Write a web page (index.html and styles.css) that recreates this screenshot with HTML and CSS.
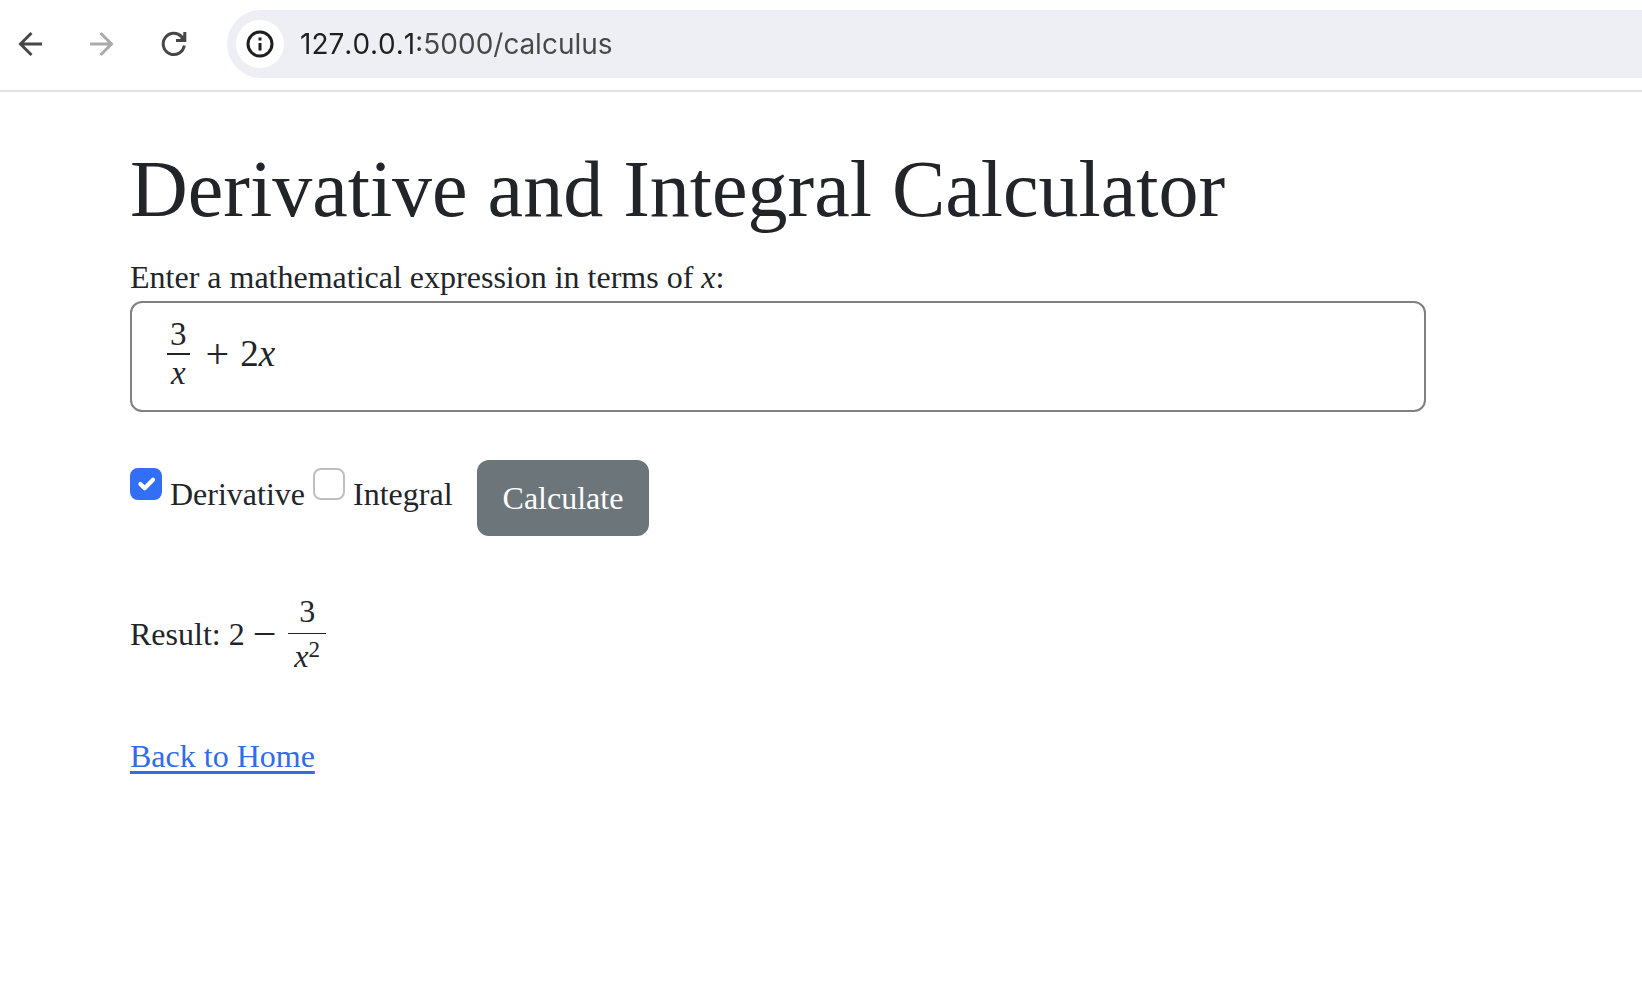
FILE: index.html
```html
<!DOCTYPE html>
<html lang="en">
<head>
<meta charset="utf-8">
<meta name="viewport" content="width=device-width, initial-scale=1">
<title>Derivative and Integral Calculator</title>
<link rel="stylesheet" href="styles.css">
</head>
<body>
<header class="toolbar">
  <button class="nav-button" type="button" aria-label="Back">
    <svg viewBox="0 0 40 40" width="40" height="40"><path d="M31 20H9.500M20.500 9L9.500 20L20.500 31"/></svg>
  </button>
  <button class="nav-button" type="button" aria-label="Forward" disabled>
    <svg viewBox="0 0 40 40" width="40" height="40"><path d="M7 20H28.500M17.500 9L28.500 20L17.500 31"/></svg>
  </button>
  <button class="nav-button" type="button" aria-label="Reload">
    <svg viewBox="0 0 40 40" width="40" height="40"><path d="M29.300 21.500A10.600 10.600 0 1 1 26.500 12.600L29 15.500"/><path d="M29.800 8V16.500H21"/><path class="fill" d="M31 9V18H22Z"/></svg>
  </button>
  <div class="address">
    <button class="site-info" type="button" aria-label="View site information">
      <svg viewBox="0 0 28 28" width="28" height="28"><circle cx="14" cy="14" r="12"/><path d="M14 13V20.500"/><path d="M14 7.500V10.500"/></svg>
    </button>
    <input class="url" type="text" aria-label="Address" value="127.0.0.1:5000/calculus">
  </div>
</header>

<main class="page">
  <h1 class="title">Derivative and Integral Calculator</h1>
  <form class="calculator">
    <div id="prompt">Enter a mathematical expression in terms of <i>x</i>:</div>
    <div class="math-field" role="textbox" contenteditable="true" spellcheck="false" aria-labelledby="prompt"><span class="frac"><span class="num">3</span><span class="den"><i>x</i></span></span><span class="op">+</span><span>2<i>x</i></span></div>
    <div class="options">
      <input class="check" type="checkbox" id="derivative" checked>
      <label for="derivative">Derivative</label>
      <input class="check" type="checkbox" id="integral">
      <label for="integral">Integral</label>
      <button class="calculate" type="button">Calculate</button>
    </div>
  </form>
  <div class="result">
    <span>Result:</span>
    <span class="answer"><span>2</span><span class="op">−</span><span class="frac"><span class="num">3</span><span class="den"><i>x</i><sup>2</sup></span></span></span>
  </div>
  <a class="home" href="/">Back to Home</a>
</main>
</body>
</html>
```

FILE: styles.css
```css
* {
  box-sizing: border-box;
}

body {
  margin: 0;
  background: #fff;
  color: #212529;
  font: 32px/48px "Liberation Serif", "Times New Roman", serif;
}

/* Browser toolbar */
.toolbar {
  display: flex;
  align-items: center;
  gap: 32px;
  padding: 10px 0 12px 11px;
  border-bottom: 2px solid #e1e1e3;
}

.nav-button {
  flex: none;
  padding: 0;
  border: 0;
  background: none;
  color: #474747;
}

.nav-button:disabled {
  color: #ababab;
}

.nav-button svg,
.site-info svg {
  display: block;
  fill: none;
  stroke: currentColor;
  stroke-width: 3;
}

.nav-button .fill {
  fill: currentColor;
  stroke: none;
}

.address {
  flex: 1;
  display: flex;
  align-items: center;
  gap: 16px;
  min-width: 0;
  height: 68px;
  padding-left: 9px;
  border-radius: 34px 0 0 34px;
  background: #eeeff5;
}

.site-info {
  display: grid;
  place-items: center;
  flex: none;
  width: 48px;
  height: 48px;
  padding: 0;
  border: 0;
  border-radius: 50%;
  background: #fff;
  color: #1f1f1f;
}

/* The host part of the address is darker than the rest */
.url {
  flex: 1;
  min-width: 0;
  padding: 0;
  border: 0;
  outline: 0;
  background: linear-gradient(90deg, #1f1f1f 119px, #474747 119px);
  -webkit-background-clip: text;
  background-clip: text;
  color: transparent;
  caret-color: #1f1f1f;
  font: 28px/40px Inter, Roboto, sans-serif;
  font-kerning: none;
}

/* Page */
.page {
  padding: 49px 216px 48px 130px;
}

.title {
  margin: 0 0 16px;
  font-size: 80px;
  line-height: 96px;
  font-weight: 400;
}

.math-field {
  display: flex;
  align-items: center;
  min-height: 111px;
  padding: 0 35px 6px;
  border: 2px solid #808080;
  border-radius: 12px;
  outline: 0;
  font-size: 37px;
}

.frac {
  display: inline-flex;
  flex-direction: column;
  text-align: center;
}

.num {
  border-bottom: 2px solid currentColor;
}

.math-field .frac {
  font-size: 33px;
  line-height: 37px;
}

.math-field .num,
.math-field .den {
  padding: 0 3px;
}

.op {
  font-size: 42px;
}

.math-field .op {
  margin: 0 11px 0 16px;
}

.options {
  margin-top: 48px;
}

.check {
  appearance: none;
  width: 32px;
  height: 32px;
  margin: 8px 0 0;
  border: 2px solid #bfbfbf;
  border-radius: 8px;
  background: #fff;
  vertical-align: top;
}

.check:checked {
  border-color: #326ef6;
  background: #326ef6 url("data:image/svg+xml,%3Csvg xmlns='http://www.w3.org/2000/svg' viewBox='0 0 20 20'%3E%3Cpath fill='none' stroke='%23fff' stroke-linecap='round' stroke-linejoin='round' stroke-width='3' d='m6 10 3 3 6-6'/%3E%3C/svg%3E") center / contain no-repeat;
}

.calculate {
  margin-left: 16px;
  padding: 12px 24px;
  border: 2px solid #6c757a;
  border-radius: 12px;
  background: #6c757a;
  color: #fff;
  font: inherit;
  vertical-align: middle;
}

.result {
  display: flex;
  align-items: center;
  gap: 8px;
  margin-top: 53px;
}

.answer {
  display: flex;
  align-items: center;
}

.answer .op {
  margin: 0 12px 0 8px;
}

.answer .frac {
  line-height: 44px;
}

.answer .num {
  border-bottom-width: 1px;
}

.answer .den {
  padding: 0 6px;
}

.answer sup {
  font-size: 23px;
  line-height: 0;
  vertical-align: 10px;
}

.home {
  display: inline-block;
  margin-top: 54px;
  color: #326be9;
  text-decoration-thickness: 3px;
  text-underline-offset: 4px;
}
```
